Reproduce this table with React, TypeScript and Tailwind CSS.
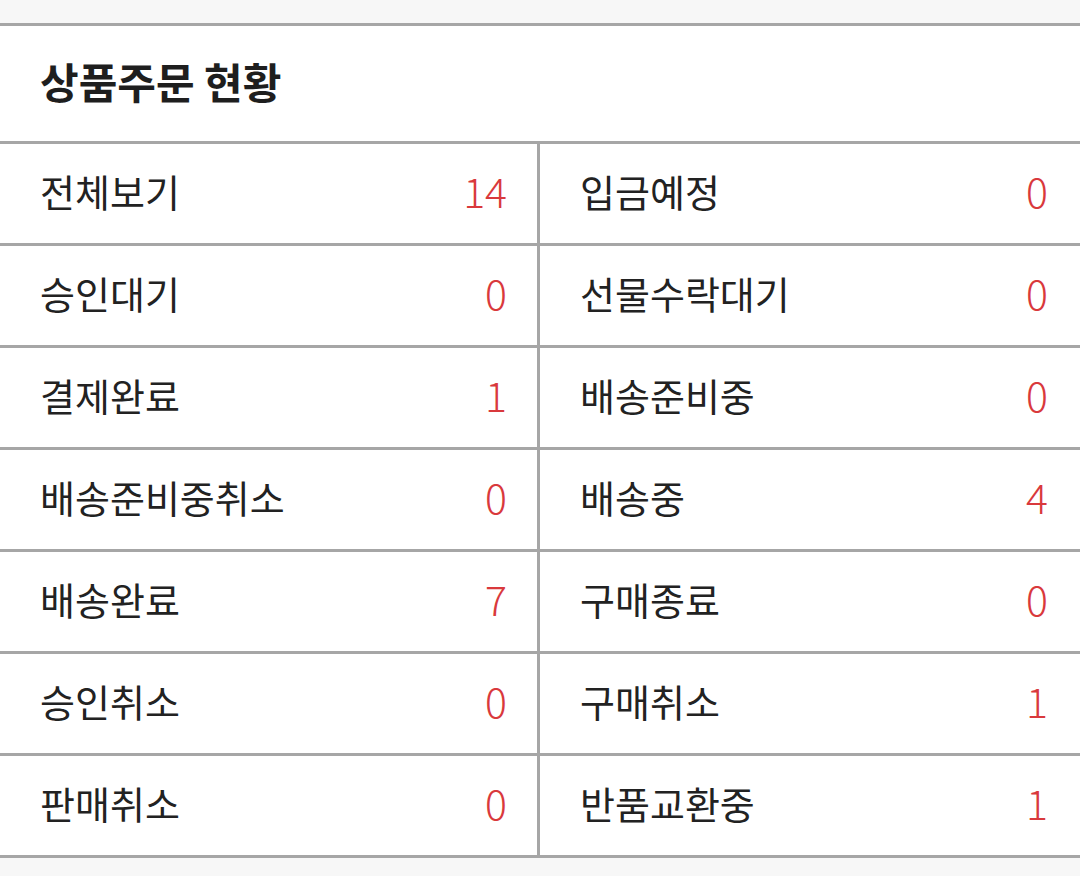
const rows: [string, number, string, number][] = [
  ["전체보기", 14, "입금예정", 0],
  ["승인대기", 0, "선물수락대기", 0],
  ["결제완료", 1, "배송준비중", 0],
  ["배송준비중취소", 0, "배송중", 4],
  ["배송완료", 7, "구매종료", 0],
  ["승인취소", 0, "구매취소", 1],
  ["판매취소", 0, "반품교환중", 1],
];

const Cell = ({ label, count }: { label: string; count: number }) => (
  <div className="flex h-full items-center justify-between pb-[6px]">
    <span className="text-[38px] text-[#222222]">{label}</span>
    <span className="text-[41px] font-light text-[#d9393c]">{count}</span>
  </div>
);

const App = (): JSX.Element => {
  return (
    <div
      className="min-h-[876px] w-[1080px] bg-[#f7f7f7] pt-[23px]"
      style={{ fontFamily: '"Noto Sans CJK KR", "Noto Sans", sans-serif' }}
    >
      <div className="border-y-[3px] border-[#a6a6a6] bg-white">
        <div className="flex h-[118px] items-center border-b-[3px] border-[#a6a6a6] pb-[6px] pl-[40px]">
          <h1 className="text-[42px] font-bold text-[#1e1e1e]">상품주문 현황</h1>
        </div>
        {rows.map(([l, lc, r, rc], i) => (
          <div
            key={l}
            className={
              i < rows.length - 1
                ? "flex h-[102px] border-b-[3px] border-[#a6a6a6]"
                : "flex h-[99px]"
            }
          >
            <div className="w-[540px] border-r-[3px] border-[#a6a6a6] pl-[40px] pr-[30px]">
              <Cell label={l} count={lc} />
            </div>
            <div className="flex-1 pl-[40px] pr-[32px]">
              <Cell label={r} count={rc} />
            </div>
          </div>
        ))}
      </div>
    </div>
  );
};

export default App;
